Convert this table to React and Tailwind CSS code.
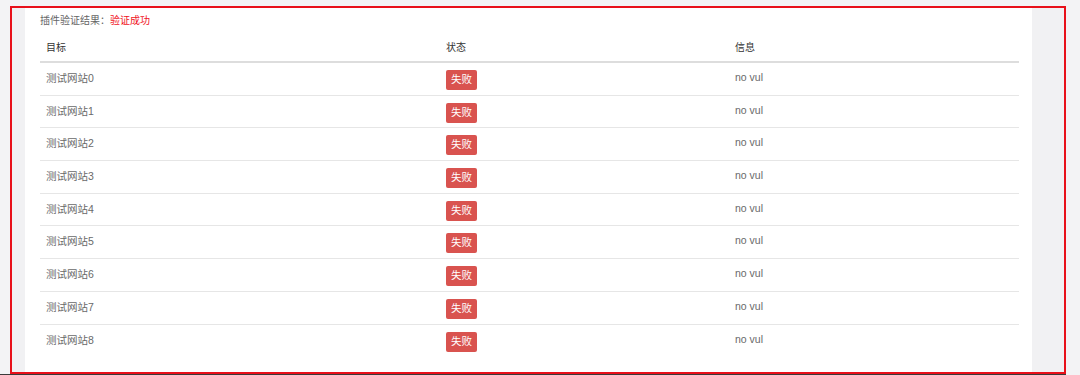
import React from "react";

const rows = Array.from({ length: 9 }, (_, i) => ({
  target: `测试网站${i}`,
  status: "失败",
  info: "no vul",
}));

const font = { fontFamily: '"Liberation Sans","Noto Sans CJK SC",sans-serif' };

const App = () => {
  return (
    <div className="w-[1080px] h-[375px] bg-[#f3f3f5] flex flex-col overflow-hidden" style={font}>
      <div className="ml-[10px] mt-[6px] w-[1056px] h-[368px] border-2 border-[#e8101a] bg-[#f1f1f3] pl-[13px] pr-[32px] flex">
        {/* white panel */}
        <div className="flex-1 bg-white pl-[15px] pr-[13px] flex flex-col">
          <div className="h-[25px] flex items-center text-[10px] text-[#666]">
            <span>插件验证结果：</span>
            <span className="text-[#f0141e]">验证成功</span>
          </div>

          <div className="flex h-[30px] items-center border-b-2 border-[#dddddd] text-[10px] text-[#333]">
            <div className="w-[400px] px-[6px]">目标</div>
            <div className="w-[289px] px-[6px]">状态</div>
            <div className="flex-1 px-[6px]">信息</div>
          </div>

          {rows.map((r, i) => (
            <div
              key={i}
              className={`flex h-[32.7px] items-center text-[10.5px] text-[#6a6a6a] ${
                i < rows.length - 1 ? "border-b border-[#e6e6e6]" : ""
              }`}
            >
              <div className="w-[400px] px-[6px]">{r.target}</div>
              <div className="w-[289px] px-[6px]">
                <span className="inline-flex items-center h-[20px] mt-[2px] px-[5px] bg-[#d9534f] text-white text-[10.5px] rounded-[2px]">
                  {r.status}
                </span>
              </div>
              <div className="flex-1 px-[6px] -mt-[2px]">{r.info}</div>
            </div>
          ))}
        </div>
      </div>
      <div className="w-[1066px] h-[1px] bg-[#3a3a3a]" />
    </div>
  );
};

export default App;
